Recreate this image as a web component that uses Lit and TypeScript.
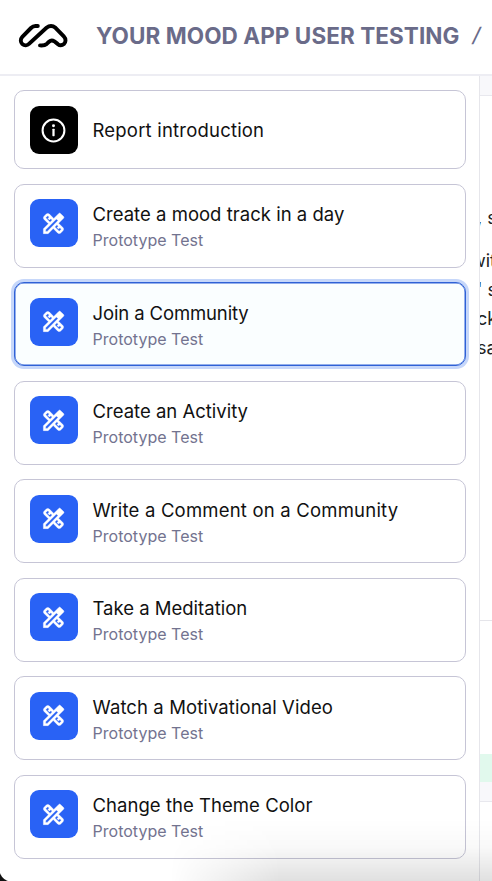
import { LitElement, html, css, svg } from "lit";
import { customElement, property } from "lit/decorators.js";
import { classMap } from "lit/directives/class-map.js";
import { styleMap } from "lit/directives/style-map.js";

const INFO_ICON = svg`<circle cx="12" cy="12" r="9.7" fill="none" stroke="currentColor" stroke-width="1.8"/>
  <rect x="11" y="10.4" width="2" height="6.6" rx=".5" fill="currentColor"/><circle cx="12" cy="7.8" r="1.3" fill="currentColor"/>`;
const DESIGN_ICON = svg`<path fill="currentColor" stroke="currentColor" stroke-width=".35" d="M20.97 7.27a.996.996 0 0 0 0-1.41l-2.83-2.83a.996.996 0 0 0-1.41 0l-4.49 4.49-3.89-3.89c-.78-.78-2.05-.78-2.83 0l-1.9 1.9c-.78.78-.78 2.05 0 2.83l3.89 3.89L3 16.76V21h4.24l4.52-4.52 3.89 3.89c.95.95 2.23.6 2.83 0l1.9-1.9c.78-.78.78-2.05 0-2.83l-3.89-3.89 4.48-4.48zM5.04 6.94l1.89-1.9L8.2 6.31 7.02 7.5l1.41 1.41 1.19-1.19 1.2 1.2-1.9 1.9-3.88-3.88zm11.23 7.44-1.19 1.19 1.41 1.41 1.19-1.19 1.27 1.27-1.9 1.9-3.89-3.89 1.9-1.9 1.21 1.21zM6.41 19H5v-1.41l9.61-9.61 1.3 1.3.11.11L6.41 19z"/>`;

interface Block { title: string; tracking: number; kind?: string; selected?: boolean; }

const BLOCKS: Block[] = [
  { title: "Report introduction", tracking: 0.2 },
  { title: "Create a mood track in a day", tracking: 0.02, kind: "Prototype Test" },
  { title: "Join a Community", tracking: -0.12, kind: "Prototype Test", selected: true },
  { title: "Create an Activity", tracking: 0, kind: "Prototype Test" },
  { title: "Write a Comment on a Community", tracking: 0.2, kind: "Prototype Test" },
  { title: "Take a Meditation", tracking: 0, kind: "Prototype Test" },
  { title: "Watch a Motivational Video", tracking: 0.1, kind: "Prototype Test" },
  { title: "Change the Theme Color", tracking: 0.04, kind: "Prototype Test" },
];

@customElement("report-card")
class ReportCard extends LitElement {
  @property({ attribute: false }) block!: Block;

  static styles = css`
    :host { display: block; }
    .card {
      box-sizing: border-box; height: 84px; padding: 0 15px; display: flex; align-items: flex-start;
      border: 1px solid #c6c5d6; border-radius: 10px; background: #fff;
    }
    .card.intro { height: 79px; }
    .card.selected { border-color: #2f61d6; background: #fafeff; box-shadow: 0 0 0 3px #c6d7fa, inset 0 0 0 .5px #2f61d6; }
    .tile {
      box-sizing: border-box; width: 48px; height: 48px; margin-top: 14.5px; padding-right: 1px;
      border-radius: 9px; background: #2962f5; color: #fff; display: grid; place-items: center; flex: none;
    }
    .intro .tile { background: #000; margin-top: 15px; }
    svg { width: 27px; height: 27px; display: block; }
    .text { margin: 17.5px 0 0 14.5px; white-space: nowrap; }
    .intro .text { margin-top: 27px; }
    .title { font-size: 18.5px; line-height: 24px; color: #111; }
    .kind { font-size: 16px; line-height: 22px; margin-top: 3px; color: #73738f; letter-spacing: .02px; }
  `;

  render() {
    const b = this.block;
    return html`<div class=${classMap({ card: true, intro: !b.kind, selected: !!b.selected })}>
      <div class="tile"><svg viewBox="0 0 24 24">${b.kind ? DESIGN_ICON : INFO_ICON}</svg></div>
      <div class="text">
        <div class="title" style=${styleMap({ letterSpacing: `${b.tracking}px` })}>${b.title}</div>
        ${b.kind ? html`<div class="kind">${b.kind}</div>` : null}
      </div>
    </div>`;
  }
}

@customElement("app-root")
class AppRoot extends LitElement {
  static styles = css`
    :host {
      display: block; position: relative; width: 492px; height: 881px; overflow: hidden;
      background: #fff; font-family: Inter, "Liberation Sans", sans-serif;
    }
    header {
      box-sizing: border-box; height: 76px; border-bottom: 2px solid #ededf3; display: flex;
      align-items: center; padding: 0 0 4px 16px; white-space: nowrap; font-size: 22.5px; color: #6a6b89;
    }
    .logo { width: 56px; height: 36px; margin-right: 24px; flex: none; }
    .project { font-weight: 700; letter-spacing: .07px; }
    .slash { margin-left: 14px; font-size: 20px; font-weight: 500; transform: skewX(-12deg); }
    .body { display: flex; height: 805px; }
    .list {
      box-sizing: border-box; width: 480px; flex: none; border-right: 1px solid #e6e6eb;
      padding: 14px 13px 0 14px; display: flex; flex-direction: column; gap: 14.5px;
    }
    .panel { width: 12px; overflow: hidden; display: flex; flex-direction: column; }
    .band { box-sizing: border-box; height: 20px; background: #f8f8fb; border-bottom: 1px solid #e8e8ee; flex: none; }
    .prose {
      box-sizing: border-box; height: 525px; padding-top: 107px; border-bottom: 1px solid #e5e5ea;
      font-size: 18px; line-height: 29px; color: #222; white-space: nowrap; flex: none;
    }
    .first { margin-bottom: 14px; }
    .prose div { margin-left: -3px; }
    .prose .wide { margin-left: -9px; }
    .space { height: 133px; flex: none; }
    .green { height: 28px; background: #e1f9ed; flex: none; }
    .shade {
      position: absolute; left: 170px; right: 0; bottom: 0; height: 62px; pointer-events: none;
      background: linear-gradient(to bottom, transparent, rgba(0,0,0,.025) 45%, rgba(0,0,0,.12));
      -webkit-mask-image: linear-gradient(to right, transparent, #000 110px);
      mask-image: linear-gradient(to right, transparent, #000 110px);
    }
    .corner {
      position: absolute; left: 0; bottom: 0; width: 13px; height: 13px;
      background: radial-gradient(circle at 100% 0, transparent 13.5px, #111 14.5px);
    }
  `;

  render() {
    return html`
      <header>
        <svg class="logo" viewBox="16 16 56 36" fill="none" stroke="#000" stroke-width="3.9" stroke-linecap="round" stroke-linejoin="round">
          <path d="M37.8 25H35.5Q33 25 31 27L22.3 35.8C20 38.2 20.6 41.5 22.3 43C24.5 44.8 27.3 44.5 29 42.9L46.5 26.8Q51 23 55.5 26.8L63.8 35.3C66.4 38 65.7 41.3 63.9 43C61.9 44.7 59.4 44.4 57.6 42.9L54.3 40.3Q51.5 38.4 49 40.7L46.7 42.9Q44.5 44.8 40 44.4"/>
        </svg>
        <span class="project">YOUR MOOD APP USER TESTING</span><span class="slash">/</span>
      </header>
      <div class="body">
        <div class="list">${BLOCKS.map((b) => html`<report-card .block=${b}></report-card>`)}</div>
        <div class="panel">
          <div class="band"></div>
          <div class="prose">
            <div class="first">, s</div><div class="wide">wit</div><div>' s</div><div>ck</div><div>sa</div>
          </div>
          <div class="space"></div>
          <div class="green"></div>
          <div class="band"></div>
        </div>
      </div>
      <div class="shade"></div>
      <div class="corner"></div>
    `;
  }
}
